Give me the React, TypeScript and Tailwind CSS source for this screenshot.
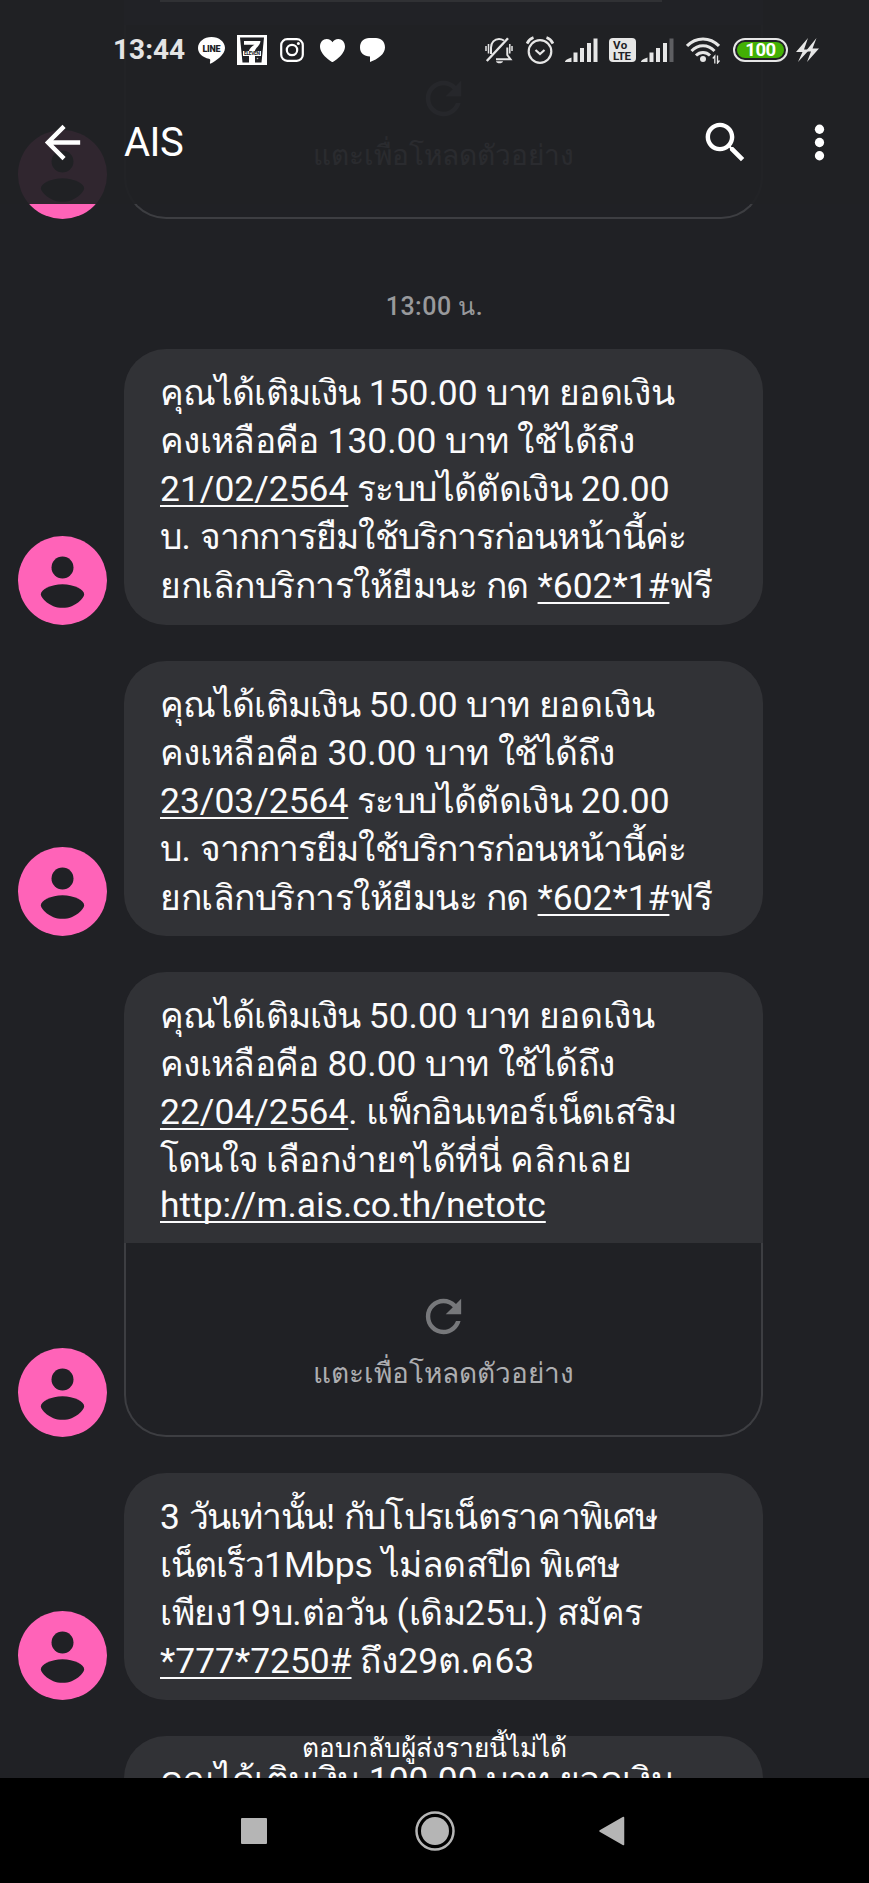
import React from 'react';

interface TextLine {
  before?: string;
  link?: string;
  after?: string;
  className?: string;
}

interface Message {
  id: number;
  lines: TextLine[];
  textClass: string;
  preview?: boolean;
}

const messages: Message[] = [
  {
    id: 1,
    textClass: 'h-[276px]',
    lines: [
      { before: 'คุณได้เติมเงิน 150.00 บาท ยอดเงิน' },
      { before: 'คงเหลือคือ 130.00 บาท ใช้ได้ถึง' },
      { link: '21/02/2564', after: ' ระบบได้ตัดเงิน 20.00' },
      { before: 'บ. จากการยืมใช้บริการก่อนหน้านี้ค่ะ' },
      { before: 'ยกเลิกบริการให้ยืมนะ กด ', link: '*602*1#', after: 'ฟรี' },
    ],
  },
  {
    id: 2,
    textClass: 'h-[275px]',
    lines: [
      { before: 'คุณได้เติมเงิน 50.00 บาท ยอดเงิน' },
      { before: 'คงเหลือคือ 30.00 บาท ใช้ได้ถึง' },
      { link: '23/03/2564', after: ' ระบบได้ตัดเงิน 20.00' },
      { before: 'บ. จากการยืมใช้บริการก่อนหน้านี้ค่ะ' },
      { before: 'ยกเลิกบริการให้ยืมนะ กด ', link: '*602*1#', after: 'ฟรี' },
    ],
  },
  {
    id: 3,
    textClass: 'h-[271px]',
    preview: true,
    lines: [
      { before: 'คุณได้เติมเงิน 50.00 บาท ยอดเงิน' },
      { before: 'คงเหลือคือ 80.00 บาท ใช้ได้ถึง' },
      { link: '22/04/2564', after: '. แพ็กอินเทอร์เน็ตเสริม' },
      { before: 'โดนใจ เลือกง่ายๆได้ที่นี่ คลิกเลย' },
      { link: 'http://m.ais.co.th/netotc', className: '-mt-1' },
    ],
  },
  {
    id: 4,
    textClass: 'h-[227px]',
    lines: [
      { before: '3 วันเท่านั้น! กับโปรเน็ตราคาพิเศษ' },
      { before: 'เน็ตเร็ว1Mbps ไม่ลดสปีด พิเศษ' },
      { before: 'เพียง19บ.ต่อวัน (เดิม25บ.) สมัคร' },
      { link: '*777*7250#', after: ' ถึง29ต.ค63' },
    ],
  },
];

// Letter spacing for Thai words that need something other than the default
const thaiTracking: Record<string, string> = {
  คุณได้เติมเงิน: 'tracking-[-0.9px]',
  ยอดเงิน: 'tracking-[-0.4px]',
  คงเหลือคือ: 'tracking-[-0.65px]',
  ระบบได้ตัดเงิน: 'tracking-[-0.65px]',
  จากการยืมใช้บริการก่อนหน้านี้ค่ะ: 'tracking-[-0.9px]',
  แพ็กอินเทอร์เน็ตเสริม: 'tracking-[-0.75px]',
  โดนใจ: 'tracking-[-1.3px]',
  คลิกเลย: 'tracking-normal',
  วันเท่านั้น: 'tracking-[-1.4px]',
  กับโปรเน็ตราคาพิเศษ: 'tracking-[-0.75px]',
  เน็ตเร็ว: 'tracking-[-1px]',
  พิเศษ: 'tracking-normal',
  ถึง: 'tracking-normal',
  ต: 'tracking-normal',
  ค: 'tracking-normal',
};

const renderText = (text?: string) =>
  text
    ?.split(/([\u0E00-\u0E7F]+)/)
    .map((part, i) =>
      i % 2 === 1 ? (
        <span key={i} className={thaiTracking[part] || 'tracking-[-0.5px]'}>
          {part}
        </span>
      ) : (
        part
      )
    );

const Avatar: React.FC = () => (
  <svg className="w-[89px] h-[89px] shrink-0" viewBox="0 0 89 89">
    <circle cx="44.5" cy="44.5" r="44.5" fill="#ff63b8" />
    <circle cx="44.5" cy="31.5" r="11" fill="#202125" />
    <path
      d="M44.5 48.2C33 48.2 22.8 53.5 22.8 58.4C22.8 61 31 71.8 44.5 71.8C58 71.8 66.2 61 66.2 58.4C66.2 53.5 56 48.2 44.5 48.2Z"
      fill="#202125"
    />
  </svg>
);

const PreviewCard: React.FC = () => (
  <div className="h-[194px] rounded-b-[42px] border-2 border-t-0 border-[#3d3e42] bg-[#202125] flex flex-col items-center pt-[47px]">
    <svg className="w-[53px] h-[53px] shrink-0" viewBox="0 0 24 24" fill="#77787b">
      <path d="M17.65 6.35C16.2 4.9 14.21 4 12 4c-4.42 0-7.99 3.58-7.99 8s3.57 8 7.99 8c3.73 0 6.84-2.55 7.73-6h-2.08c-.82 2.33-3.04 4-5.65 4-3.31 0-6-2.69-6-6s2.69-6 6-6c1.66 0 3.14.69 4.22 1.78L13 11h7V4l-2.35 2.35z" />
    </svg>
    <div className="mt-[11px] h-10 text-[28px] leading-10 text-[#adaeb1] whitespace-nowrap">แตะเพื่อโหลดตัวอย่าง</div>
  </div>
);

const Line: React.FC<{ line: TextLine }> = ({ line }) => (
  <div className={`h-[48.3px] leading-[48.3px] whitespace-pre ${line.className || ''}`}>
    {renderText(line.before)}
    {line.link && (
      <a className="underline decoration-2 underline-offset-[4px] [text-decoration-skip-ink:none]">{line.link}</a>
    )}
    {renderText(line.after)}
  </div>
);

const MessageRow: React.FC<{ message: Message }> = ({ message }) => (
  <div className="flex items-end gap-[17px] pl-[18px]">
    <Avatar />
    <div className="w-[639px]">
      <div
        className={`bg-[#313236] pl-[36px] pt-[19.5px] text-[35.4px] text-[#fbfbfc] ${message.textClass} ${
          message.preview ? 'rounded-t-[42px]' : 'rounded-[42px]'
        }`}
      >
        {message.lines.map((line, i) => (
          <Line key={i} line={line} />
        ))}
      </div>
      {message.preview && <PreviewCard />}
    </div>
  </div>
);

const Signal: React.FC<{ weak?: boolean }> = ({ weak }) => (
  <svg className="w-[33px] h-[24px] shrink-0" viewBox="0 0 33 24" fill="#e6e6e6">
    <path d="M0 24C0 22 3 21 6.5 19.5V24Z" />
    <rect x="8.5" y="14.5" width="4" height="9.5" />
    <rect x="15" y="10" width="4" height="14" />
    <rect x="22" y="5" width="4" height="19" />
    <rect x="28.5" y="0.5" width="4" height="23.5" fill={weak ? '#5e5f62' : '#e6e6e6'} />
  </svg>
);

const StatusBar: React.FC = () => (
  <div className="h-[100px] pl-[113px] pr-[50px] flex items-center justify-between">
    <div className="flex items-center">
      <span className="w-[72px] text-[28px] leading-none font-bold text-[#e4e4e4]">13:44</span>
      <svg className="ml-[13px] w-[27px] h-[27px]" viewBox="0 0 27 27">
        <path d="M13.5 0C6 0 0 4.9 0 11c0 5.4 4.7 9.7 11 10.7 1 .2 1.4.8 1.2 2l-.3 2.4c0 .6.4.8 1 .5C17.5 24 27 18 27 11 27 4.9 21 0 13.5 0Z" fill="#fff" />
        <text x="13.5" y="14.7" textAnchor="middle" fontSize="9" fontWeight="900" fill="#202125" textLength="18" fontFamily="Roboto, sans-serif">LINE</text>
      </svg>
      <svg className="ml-[12px] w-[30px] h-[30px]" viewBox="0 0 30 30">
        <rect width="30" height="30" fill="#fff" />
        <path d="M3 2.5H27L24.5 27.5H5.5Z" fill="#202125" />
        <path d="M7 6H23.5C23 11 18.5 12.5 17.5 17H11.5C12.5 13 15.5 11 17.5 9.8H7Z" fill="#fff" />
        <rect x="6" y="16" width="18" height="5" fill="#fff" />
        <text x="15" y="20.4" textAnchor="middle" fontSize="5" fontWeight="700" fill="#202125" textLength="16" fontFamily="Roboto, sans-serif">ELEVEN</text>
        <path d="M12 21H18V28H12Z" fill="#fff" />
        <circle cx="20.5" cy="23.5" r="0.8" fill="#b5b5b5" />
      </svg>
      <svg className="ml-[13px] w-[24px] h-[24px]" viewBox="0 0 24 24" fill="none" stroke="#fff">
        <rect x="1.2" y="1.2" width="21.6" height="21.6" rx="6" strokeWidth="2.2" />
        <circle cx="12" cy="12" r="5.2" strokeWidth="2.2" />
        <circle cx="18.4" cy="5.6" r="1.5" fill="#fff" stroke="none" />
      </svg>
      <svg className="ml-[16px] w-[25px] h-[23px]" viewBox="0 0 25 23" fill="#fff">
        <path d="M12.5 23C11.5 23 0 15.5 0 7.5 0 3 3 0 6.7 0 9.4 0 11.5 1.4 12.5 3.2 13.5 1.4 15.6 0 18.3 0 22 0 25 3 25 7.5 25 15.5 13.5 23 12.5 23Z" />
      </svg>
      <svg className="ml-[15px] w-[25px] h-[24px]" viewBox="0 0 25 24" fill="#fff">
        <path d="M9 0H16C21 0 25 3.5 25 9.5 25 16 18 21 10 24V18.5C4 18.5 0 15 0 9.5 0 3.5 4 0 9 0Z" />
      </svg>
    </div>
    <div className="flex items-center">
      <svg className="w-[28px] h-[27px]" viewBox="0 0 28 27" fill="none" stroke="#e6e6e6" strokeWidth="2">
        <path d="M11 22.2H25.5L22.3 18V10.5M6 17V10.5C6 5.5 9.5 2 14 2 16 2 17.5 2.6 19 3.5" />
        <path d="M1.8 24L23 1.2" strokeWidth="2.4" />
        <path d="M11 24.3H18C17.5 27 11.5 27 11 24.3Z" fill="#e6e6e6" stroke="none" />
        <path d="M1 9V14M27 9V14M3.5 7V16.5M24.8 7V16.5" strokeWidth="1.5" />
      </svg>
      <svg className="ml-[13px] w-[28px] h-[28px]" viewBox="0 0 28 28" fill="none" stroke="#e6e6e6" strokeWidth="2.2">
        <circle cx="14" cy="15.5" r="11.3" />
        <path d="M1 7.5C2.5 4.5 4.5 2.5 7.5 1.5M27 7.5C25.5 4.5 23.5 2.5 20.5 1.5" strokeWidth="2.8" />
        <path d="M9.5 14L14 18L18.5 14" />
      </svg>
      <div className="ml-[11px]"><Signal /></div>
      <div className="ml-[11px] w-[27px] h-[24px] rounded-[4px] bg-[#e6e6e6] text-[#202125] font-bold text-[11.5px] leading-[10.5px] pt-[2px] pl-[4px]">
        <div className="tracking-[0.5px]">Vo</div>
        <div className="tracking-[-0.3px]">LTE</div>
      </div>
      <div className="ml-[5px]"><Signal weak /></div>
      <svg className="ml-[12px] w-[34px] h-[27px]" viewBox="0 0 34 27" fill="none" stroke="#e6e6e6" strokeWidth="3">
        <path d="M1 9C10 -0.5 24 -0.5 33 9" />
        <path d="M5.5 14C12 7 22 7 28.5 14" />
        <path d="M10 18.5C14 14.5 20 14.5 24 18.5" />
        <circle cx="17" cy="22" r="3" fill="#e6e6e6" stroke="none" />
        <path d="M28.8 26.5V19L26.8 21.5M31.5 18.5V26L33.5 23.5" strokeWidth="1.3" />
      </svg>
      <div className="ml-[13px] w-[55px] h-[24px] rounded-full border-2 border-[#e6e6e6] p-[2px]">
        <div className="h-full rounded-full bg-[#43b005] text-white font-bold text-[18.5px] leading-[17px] tracking-[-0.5px] text-center">100</div>
      </div>
      <svg className="ml-[8px] w-[23px] h-[24px]" viewBox="0 0 23 24" fill="#e6e6e6">
        <path d="M12 0L0 14H6.5L2 24L13.5 11.5H8Z" />
        <path d="M20.5 0L9.5 13.5H15L11 24L23 10.5H16.5Z" />
      </svg>
    </div>
  </div>
);

const AppBar: React.FC = () => (
  <header className="absolute inset-x-0 top-0 h-[204px] bg-[#202125]/93 text-white">
    <StatusBar />
    <div className="h-[85px] pl-[36px] pr-[23px] flex items-center">
      <svg className="w-[53px] h-[53px]" viewBox="0 0 24 24" fill="currentColor">
        <path d="M20 11H7.83l5.59-5.59L12 4l-8 8 8 8 1.41-1.41L7.83 13H20v-2z" />
      </svg>
      <h1 className="ml-[35px] text-[40px] leading-none tracking-[-0.5px]">AIS</h1>
      <svg className="ml-auto w-[53px] h-[53px]" viewBox="0 0 24 24" fill="currentColor">
        <path d="M15.5 14h-.79l-.28-.27C15.41 12.59 16 11.11 16 9.5 16 5.91 13.09 3 9.5 3S3 5.91 3 9.5 5.91 16 9.5 16c1.61 0 3.09-.59 4.23-1.57l.27.28v.79l5 4.99L20.49 19l-4.99-5zm-6 0C7.01 14 5 11.99 5 9.5S7.01 5 9.5 5 14 7.01 14 9.5 11.99 14 9.5 14z" />
      </svg>
      <svg className="ml-[41px] w-[53px] h-[53px]" viewBox="0 0 24 24" fill="currentColor">
        <circle cx="12" cy="6" r="2.1" />
        <circle cx="12" cy="12" r="2.1" />
        <circle cx="12" cy="18" r="2.1" />
      </svg>
    </div>
  </header>
);

const NavBar: React.FC = () => (
  <nav className="h-[105px] shrink-0 bg-black flex items-center pl-[241px]">
    <div className="w-[26px] h-[26px] bg-[#b5b5b5] rounded-[1px]" />
    <svg className="ml-[148px] w-[40px] h-[40px]" viewBox="0 0 40 40">
      <circle cx="20" cy="20" r="18.5" fill="none" stroke="#b5b5b5" strokeWidth="2.5" />
      <circle cx="20" cy="20" r="14" fill="#b5b5b5" />
    </svg>
    <svg className="ml-[144px] w-[26px] h-[30px]" viewBox="0 0 26 30">
      <path d="M1 15L24.5 1.5V28.5Z" fill="#b5b5b5" stroke="#b5b5b5" strokeWidth="1.5" strokeLinejoin="round" />
    </svg>
  </nav>
);

const App: React.FC = () => {
  return (
    <div className="relative w-[869px] h-[1883px] overflow-hidden bg-[#202125] flex flex-col font-['Roboto',sans-serif]">
      <main className="relative h-[1778px] shrink-0 overflow-hidden">
        {/* tail of the previous message, seen through the app bar */}
        <div className="flex items-end gap-[17px] pl-[18px] h-[219px]">
          <Avatar />
          <div className="w-[639px]">
            <div className="h-[25px] bg-[#313236] pl-[36px]">
              <div className="w-[502px] h-[2px] bg-white" />
            </div>
            <PreviewCard />
          </div>
        </div>

        <div className="h-[130px] pt-[68px] text-center text-[25px] leading-10 font-medium tracking-[0.5px] text-[#98999c]">
          13:00 น.
        </div>

        <div className="flex flex-col gap-[36px]">
          {messages.map((message) => (
            <MessageRow key={message.id} message={message} />
          ))}
          <div className="ml-[124px] w-[639px] h-[120px] rounded-t-[42px] bg-[#313236] pl-[36px] pt-[19.5px] text-[35.4px] text-[#fbfbfc]">
            <Line line={{ before: 'คุณได้เติมเงิน 100.00 บาท ยอดเงิน' }} />
          </div>
        </div>

        <div className="absolute inset-x-0 top-[1728px] h-10 text-center text-[26.3px] leading-10 text-white whitespace-nowrap">
          ตอบกลับผู้ส่งรายนี้ไม่ได้
        </div>
      </main>
      <NavBar />
      <AppBar />
    </div>
  );
};

export default App;
